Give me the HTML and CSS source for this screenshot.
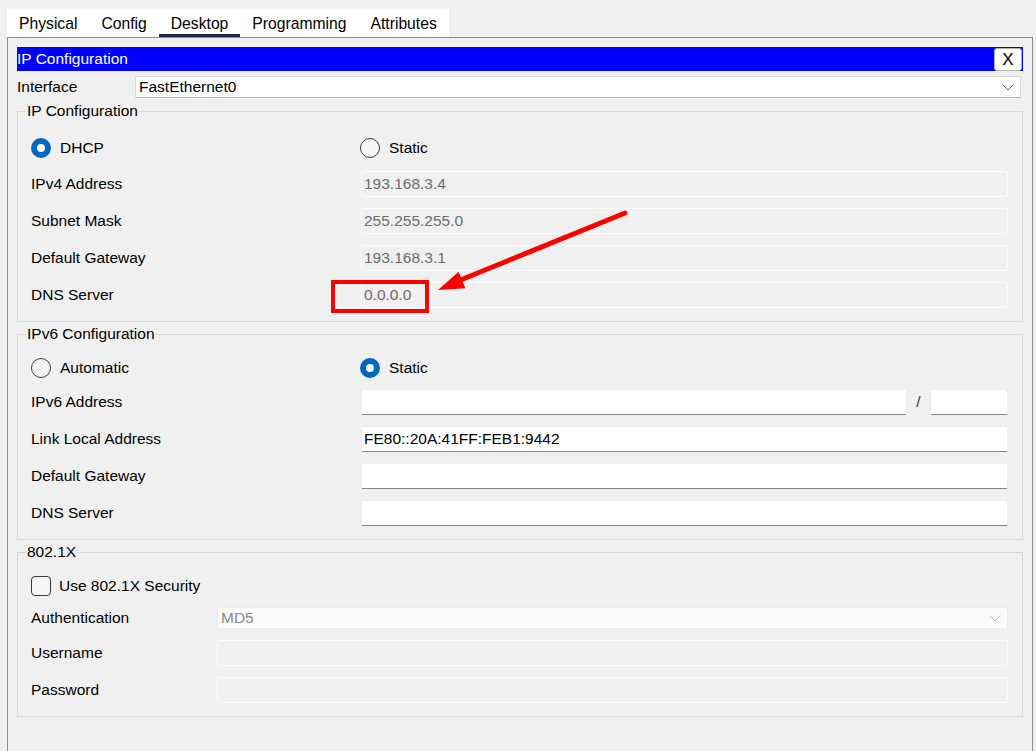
FILE: index.html
```html
<!DOCTYPE html>
<html lang="en">
<head>
<meta charset="utf-8">
<title>IP Configuration</title>
<link rel="stylesheet" href="styles.css">
</head>
<body>
<div class="window">
  <div class="tabs">
    <div class="tab">Physical</div>
    <div class="tab">Config</div>
    <div class="tab active">Desktop</div>
    <div class="tab">Programming</div>
    <div class="tab">Attributes</div>
  </div>
  <div class="panel">
    <div class="titlebar">
      <span class="title">IP Configuration</span>
      <span class="close">X</span>
    </div>
    <div class="iface-row">
      <span class="iface-label">Interface</span>
      <div class="select">
        <span>FastEthernet0</span>
        <svg class="chev" width="12" height="7" viewBox="0 0 12 7"><path d="M0.5 0.5 L6 6 L11.5 0.5" fill="none" stroke="#666" stroke-width="1"/></svg>
      </div>
    </div>

    <fieldset class="group group-ipv4">
      <legend>IP Configuration</legend>
      <div class="rows">
        <div class="row radio-row first">
          <div class="opt opt-left"><span class="radio checked"></span><span>DHCP</span></div>
          <div class="opt"><span class="radio"></span><span>Static</span></div>
        </div>
        <div class="row"><span class="label">IPv4 Address</span><div class="field disabled">193.168.3.4</div></div>
        <div class="row"><span class="label">Subnet Mask</span><div class="field disabled">255.255.255.0</div></div>
        <div class="row"><span class="label">Default Gateway</span><div class="field disabled">193.168.3.1</div></div>
        <div class="row"><span class="label">DNS Server</span><div class="field disabled">0.0.0.0</div></div>
      </div>
    </fieldset>

    <fieldset class="group group-ipv6">
      <legend>IPv6 Configuration</legend>
      <div class="rows">
        <div class="row radio-row">
          <div class="opt opt-left"><span class="radio"></span><span>Automatic</span></div>
          <div class="opt"><span class="radio checked"></span><span>Static</span></div>
        </div>
        <div class="row"><span class="label">IPv6 Address</span><div class="field"></div><span class="slash">/</span><div class="field prefix"></div></div>
        <div class="row"><span class="label">Link Local Address</span><div class="field">FE80::20A:41FF:FEB1:9442</div></div>
        <div class="row"><span class="label">Default Gateway</span><div class="field"></div></div>
        <div class="row"><span class="label">DNS Server</span><div class="field"></div></div>
      </div>
    </fieldset>

    <fieldset class="group group-8021x">
      <legend>802.1X</legend>
      <div class="rows">
        <div class="row check-row">
          <span class="checkbox"></span><span>Use 802.1X Security</span>
        </div>
        <div class="row auth-row">
          <span class="label wide">Authentication</span>
          <div class="select disabled-select">
            <span>MD5</span>
            <svg class="chev" width="12" height="7" viewBox="0 0 12 7"><path d="M0.5 0.5 L6 6 L11.5 0.5" fill="none" stroke="#bdbdbd" stroke-width="1"/></svg>
          </div>
        </div>
        <div class="row user-row"><span class="label wide">Username</span><div class="field disabled"></div></div>
        <div class="row pass-row"><span class="label wide">Password</span><div class="field disabled"></div></div>
      </div>
    </fieldset>
  </div>

  <svg class="annotation" width="1036" height="751" viewBox="0 0 1036 751">
    <rect x="333" y="282" width="94" height="29" fill="none" stroke="#ff0000" stroke-width="4"/>
    <line x1="625" y1="213" x2="458" y2="281" stroke="#ff0000" stroke-width="5" stroke-linecap="round"/>
    <polygon points="438,290 458.6,271.7 465.4,288.3" fill="#ff0000"/>
  </svg>
</div>
</body>
</html>
```

FILE: styles.css
```css
html, body {
  margin: 0;
  padding: 0;
  background: #f0f0f0;
  overflow: hidden;
}

body {
  font-family: "Liberation Sans", Arial, sans-serif;
  font-size: 15.5px;
  color: #000;
}

.window {
  position: relative;
  width: 1036px;
  height: 751px;
  padding: 9px 0 0 7px;
  box-sizing: border-box;
}

.tabs {
  display: flex;
  width: fit-content;
  height: 28px;
  background: #fff;
  font-size: 15.7px;
}

.tab {
  padding: 2px 12px 0 12px;
  line-height: 26px;
  height: 28px;
  box-sizing: border-box;
  color: #000;
}

.tab.active {
  box-shadow: inset 0 -3px 0 #1b2b4b;
}

.panel {
  width: 1026px;
  height: 740px;
  box-sizing: border-box;
  border: 1px solid #8a8d93;
  border-bottom: none;
  padding: 9px 9px 0 9px;
}

.titlebar {
  height: 24px;
  background: #0000ff;
  color: #fff;
  display: flex;
  align-items: center;
  justify-content: space-between;
}

.title {
  line-height: 24px;
}

.close {
  width: 28px;
  height: 23px;
  box-sizing: border-box;
  margin-right: 1px;
  margin-top: 1px;
  background: #fff;
  border: 1px solid #b4b4b4;
  border-radius: 3px;
  color: #000;
  font-size: 17px;
  display: flex;
  align-items: center;
  justify-content: center;
}

.iface-row {
  display: flex;
  align-items: center;
  margin-top: 5px;
  height: 22px;
}

.iface-label {
  width: 118px;
}

.select {
  flex: 1;
  height: 22px;
  box-sizing: border-box;
  background: #fff;
  border: 1px solid #d6d6d6;
  border-bottom-color: #b8b8b8;
  border-radius: 2px;
  margin-right: 2px;
  padding: 0 6px 0 3px;
  display: flex;
  align-items: center;
  justify-content: space-between;
}

.chev {
  display: block;
}

.group {
  margin: 3px 0 0 0;
  border: 1px solid #d9d9d9;
  padding: 0 14px 13px 8px;
  min-width: 0;
}

.group legend {
  padding: 0 1px;
  line-height: 18px;
}

.group-ipv4 {
  margin-top: 4px;
}

.rows {
  padding-left: 5px;
  display: flex;
  flex-direction: column;
}

.row {
  display: flex;
  align-items: center;
  height: 26px;
  margin-top: 11px;
}

.group-ipv4 .radio-row {
  margin-top: 15px;
}

.group-ipv4 .radio-row + .row {
  margin-top: 10px;
}

.group-ipv6 .radio-row {
  margin-top: 12px;
}

.group-ipv6 .radio-row + .row {
  margin-top: 8px;
}

.label {
  width: 330px;
  flex: none;
  padding-bottom: 1px;
}

.label.wide {
  width: 186px;
}

.opt {
  display: flex;
  align-items: center;
  gap: 9px;
}

.opt-left {
  width: 329px;
}

.radio {
  width: 20px;
  height: 20px;
  box-sizing: border-box;
  border-radius: 50%;
  border: 1px solid #3a3a3a;
  background: #f5f5f5;
  flex: none;
}

.radio.checked {
  border: 6px solid #0067c0;
  background: #fff;
}

.field {
  flex: 1;
  height: 26px;
  box-sizing: border-box;
  background: #fff;
  border: 1px solid #ececec;
  border-bottom: 1px solid #868686;
  border-radius: 2px;
  padding: 0 2px 1px 2px;
  display: flex;
  align-items: center;
  white-space: nowrap;
}

.field.disabled {
  background: #f0f0f0;
  border: 1px solid #fbfbfb;
  color: #6d6d6d;
}

.slash {
  width: 23px;
  flex: none;
  text-align: center;
  color: #333;
}

.field.prefix {
  flex: none;
  width: 78px;
}

.group-8021x .check-row {
  margin-top: 12px;
  gap: 8px;
}

.checkbox {
  width: 20px;
  height: 20px;
  box-sizing: border-box;
  border: 1px solid #3a3a3a;
  border-radius: 4px;
  background: #f5f5f5;
  flex: none;
}

.group-8021x .auth-row {
  margin-top: 6px;
}

.group-8021x .user-row {
  margin-top: 9px;
}

.group-8021x .pass-row {
  margin-top: 11px;
}

.disabled-select {
  background: #fafafa;
  border: 1px solid #ebebeb;
  color: #8a8a8a;
  margin-right: 0;
  padding-right: 6px;
}

.annotation {
  position: absolute;
  left: 0;
  top: 0;
  pointer-events: none;
}
```
